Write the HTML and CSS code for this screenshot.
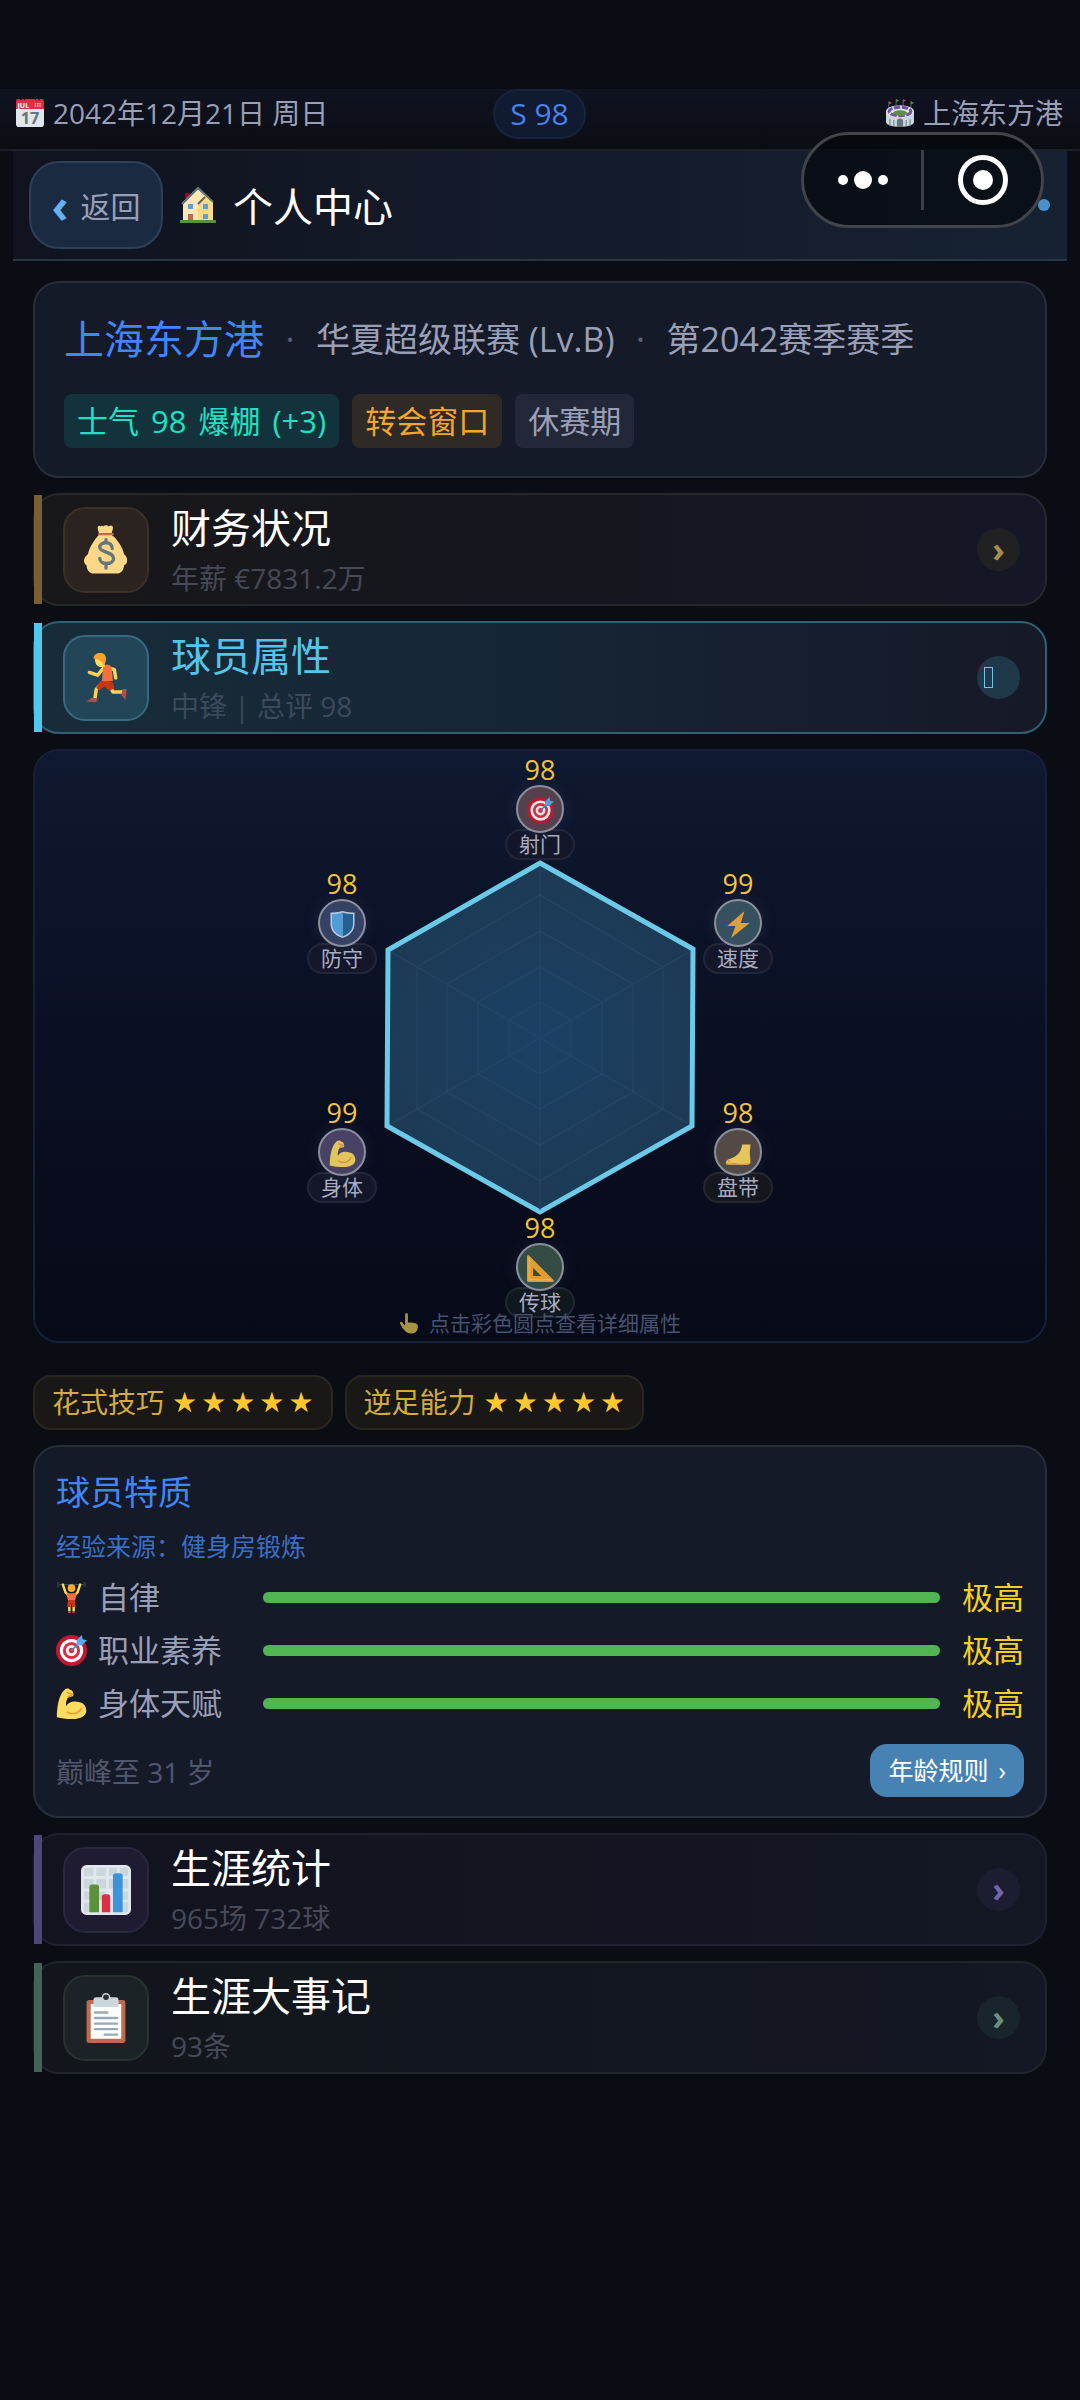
FILE: index.html
```html
<!DOCTYPE html>
<html lang="zh-CN">
<head>
    <meta charset="UTF-8">
    <meta name="viewport" content="width=device-width, initial-scale=1.0">
    <title>个人中心</title>
    <link rel="stylesheet" href="styles.css">
</head>
<body>
    <svg class="sprite" aria-hidden="true">
        <symbol id="i-calendar" viewBox="0 0 36 36" overflow="visible">
            <path fill="#e0e7ec" d="M36 32a4 4 0 0 1-4 4H4a4 4 0 0 1-4-4V9h36z"/>
            <path fill="#dd2e44" d="M0 3a3 3 0 0 1 3-3h2l1 2 2-2h2l1 2 1-2h12l1 2 1-2h2l2 2 1-2h2a3 3 0 0 1 3 3v10H0z"/>
            <g fill="#f4abba"><path d="M24 5h2v2h-2zM27 5h2v2h-2zM30 5h2v2h-2zM24 8h2v2h-2zM27 8h2v2h-2zM30 8h2v2h-2z"/></g>
            <text x="2" y="11" font-size="9" font-weight="700" fill="#fff">JUL</text>
            <text x="18" y="32" font-size="21" font-weight="700" text-anchor="middle" fill="#66757f">17</text>
        </symbol>
        <symbol id="i-stadium" viewBox="0 0 36 36">
            <path stroke="#66757f" stroke-width="1" d="M3.500 12V3M13 8V1M22 8V1M32 12V3"/>
            <path fill="#dd2e44" d="M4 3l4 2-4 2zM22 0l4 2-4 2z"/>
            <path fill="#5c913b" d="M13 0l4 2-4 2zM32 3l4 2-4 2z"/>
            <path fill="#ccd6dd" d="M0 16v14c0 3 8 6 18 6s18-3 18-6V16z"/>
            <ellipse cx="18" cy="16" rx="18" ry="8" fill="#e1e8ed"/>
            <ellipse cx="18" cy="16" rx="14" ry="5.500" fill="none" stroke="#7450a8" stroke-width="4" stroke-dasharray="8 2"/>
            <ellipse cx="18" cy="18" rx="9" ry="3.500" fill="#5c913b"/>
            <path fill="#8899a6" d="M4 26h2v8H4zM9 27h2v8H9zM25 27h2v8h-2zM30 26h2v8h-2z"/>
            <path fill="#66757f" d="M14 36v-7a4 4 0 0 1 8 0v7z"/>
        </symbol>
        <symbol id="i-house" viewBox="0 0 36 36">
            <path fill="#a0041e" d="M5 6h5v9H5z"/>
            <path fill="#ffe8b6" d="M3 17L18 2l15 13v20H3z"/>
            <path fill="#ffd983" d="M18 16l7-8 8 9v17H18z"/>
            <path fill="none" stroke="#66757f" stroke-width="2" d="M2 17L18 1l15 14"/>
            <path fill="none" stroke="#66604a" stroke-width="2" d="M18 17l7-7"/>
            <path fill="#5da1d0" d="M8 17h5v5H8zM23 17h5v5h-5zM23 27h5v5h-5z"/>
            <path fill="#c1694f" d="M8 27h5v8H8z"/>
            <path fill="#5c913b" d="M1 33h34a1 1 0 0 1 0 3H1a1 1 0 0 1 0-3z"/>
        </symbol>
        <symbol id="i-money" viewBox="0 0 36 36">
            <path fill="#fdd888" d="M12 2c0-1 1-2 2-1 1-1 2 0 2 0 1-1 3-1 4 0 1-1 3-1 3 1 0 2-1 3-1 5 4 3 8 9 9 14 3 2 3 7 0 8 0 3-2 6-5 6H9c-3 0-5-3-5-6-3-2-2-6 1-8 1-5 5-11 8-14 0-2-1-3-1-5z"/>
            <path stroke="#bf6952" stroke-width="1.600" stroke-linecap="round" d="M13 6.500h10"/>
            <path fill="none" stroke="#67757f" stroke-width="2.400" stroke-linecap="round" d="M22.500 17c0-6-9-5-9-1s10 3 10 8-10 5-10 0M18 12.500V10.500M18 31v-2.500"/>
        </symbol>
        <symbol id="i-runner" viewBox="0 0 36 36">
            <path fill="none" stroke="#fbd257" stroke-width="2.500" stroke-linecap="round" stroke-linejoin="round" d="M16 11l-4 5-6-2M21 11l3 1 1 6M15 22l-4 4-1 7M20 22l3 6 8 0"/>
            <path fill="#f4703f" d="M16 9c2-1 4-1 6 1l1 10-8 1z"/>
            <path fill="#c8360f" d="M14 20l9 1 1 5-4 1-3-3-4 3-2-2z"/>
            <path fill="#ffdc5d" d="M10 4h7v6h-3c-3 0-4-3-4-6z"/>
            <path fill="#f9a32b" d="M9 4c0-5 9-6 9 0 0 3-1 4-2 5 0-3-3-4-7-5z"/>
            <path fill="#a8524b" d="M30 26l3 0-1 8-3-4zM8 32l4 1-1 2.500-7-.5z"/>
        </symbol>
        <symbol id="i-target" viewBox="0 0 36 36">
            <circle cx="18" cy="18" r="18" fill="#be1931"/>
            <circle cx="18" cy="18" r="13.500" fill="#fff"/>
            <circle cx="18" cy="18" r="10" fill="#dd2e44"/>
            <circle cx="18" cy="18" r="6.500" fill="#fff"/>
            <circle cx="18" cy="18" r="3.200" fill="#dd2e44"/>
            <path stroke="#4289c1" stroke-width="2" d="M18 18L29 7"/>
            <path fill="#55acee" d="M24 12V6l6-6 1 5 5 1-6 6z"/>
        </symbol>
        <symbol id="i-shield" viewBox="0 0 36 36">
            <path fill="#cfe4f5" d="M18 0c6 2 11 2 16 2v15c0 10-7 16-16 19C9 33 2 27 2 17V2c5 0 10 0 16-2z"/>
            <path fill="#269" d="M18 2c5 1.500 9 2 14 2v13c0 9-6 14-14 17z"/>
            <path fill="#55acee" d="M18 2C13 3.500 9 4 4 4v13c0 9 6 14 14 17z"/>
        </symbol>
        <symbol id="i-bolt" viewBox="0 0 36 36">
            <path fill="#ffac33" d="M26 0L3 20h11L8 36l25-20H21z"/>
        </symbol>
        <symbol id="i-arm" viewBox="0 0 36 36">
            <path fill="#ffdc5d" d="M1 34C1 23 3 8 10 2c2-2 5-2 6 0 2 0 4 2 4 4 1 2 0 4-2 4l-4 1c-2 3-3 8-2 10 2-4 7-6 12-5 8 0 12 6 11 12-2 9-17 10-34 6z"/>
            <path fill="none" stroke="#ef9645" stroke-width="1.800" stroke-linecap="round" d="M13 5c2 2 5 1 6 2M14 10c2 0 3-1 4-2M13 28c6 4 14 1 16-4"/>
        </symbol>
        <symbol id="i-foot" viewBox="0 0 36 36">
            <path fill="#ffdc5d" d="M23 6h11l-1 11 1 12c0 3-2 4-5 4H4c-4 0-4-4 0-7 5-2 10-3 14-8 3-3 4-7 5-12z"/>
            <path fill="none" stroke="#ef9645" stroke-width="1.500" d="M2 31c5 3 9-1 14 1s10 0 16 0M4 27l3 2"/>
        </symbol>
        <symbol id="i-ruler" viewBox="0 0 36 36">
            <path fill="#ffac33" fill-rule="evenodd" d="M2 0l34 34-1 2H2a2 2 0 0 1-2-2V1zM8 17v11h11z"/>
            <path fill="none" stroke="#ffd983" stroke-width="1" d="M3 4v29h29"/>
        </symbol>
        <symbol id="i-point" viewBox="0 0 36 36">
            <path fill="#ffdc5d" d="M11 2c0-3 5-3 5 0v14c5 0 18 0 18 6 0 9-4 14-12 14-10 0-15-8-20-18-1-3 2-4 4-2l5 6z"/>
        </symbol>
        <symbol id="i-lifter" viewBox="0 0 36 36">
            <path stroke="#3c4650" stroke-width="1.500" d="M2 3h32"/>
            <path fill="#2b343c" d="M1 0h3v6H1zM32 0h3v6h-3z"/>
            <path fill="none" stroke="#ffdc5d" stroke-width="2.800" stroke-linecap="round" stroke-linejoin="round" d="M8 3l3 9 3 3M28 3l-3 9-3 3M15.500 26v7M20.500 26v7"/>
            <circle cx="18" cy="7" r="4.500" fill="#ffac33"/>
            <path fill="#f4703f" d="M12 13h12l-2 9h-8z"/>
            <path fill="#c23a12" d="M14 21h8l1 8h-4l-1-4-1 4h-4z"/>
            <path fill="#dd2e44" d="M14 34h3v2h-3zM19 34h3v2h-3z"/>
        </symbol>
        <symbol id="i-chart" viewBox="0 0 36 36">
            <rect width="36" height="36" rx="4" fill="#e1e8ed"/>
            <path fill="#ccd6dd" d="M2 2h7v6H2zM11 2h7v6h-7zM20 2h6v6h-6zM28 2h6v6h-6zM2 10h7v7H2zM11 10h7v7h-7zM20 10h6v7h-6zM28 10h6v7h-6zM2 19h7v6H2zM11 19h7v6h-7zM28 19h6v6h-6zM2 27h7v7H2zM28 27h6v7h-6z"/>
            <path fill="#5c913b" d="M6 34V16q0-2 2-2h3q2 0 2 2v18z"/>
            <path fill="#dd2e44" d="M15 34V23q0-2 2-2h2q2 0 2 2v11z"/>
            <path fill="#3b94d9" d="M23 34V8q0-2 2-2h3q2 0 2 2v26z"/>
        </symbol>
        <symbol id="i-clipboard" viewBox="0 0 36 36">
            <rect x="4" y="5" width="28" height="31" rx="2" fill="#c1694f"/>
            <path fill="#fff" d="M7 8h22v25H7z"/>
            <path fill="#ccd6dd" d="M9 10V5q0-2 2-2h4a3 3 0 0 1 6 0h4q2 0 2 2v5z"/>
            <circle cx="18" cy="3" r="2" fill="#292f33"/>
            <path stroke="#99aab5" stroke-width="1.700" stroke-linecap="round" d="M10 14h9M10 18h16M10 22h16M10 26h16M17 30h9"/>
        </symbol>
    </svg>

    <div class="topbar">
        <div class="topbar-item">
            <svg class="icon-sm"><use href="#i-calendar"/></svg>
            <span>2042年12月21日 周日</span>
        </div>
        <div class="rating">S 98</div>
        <div class="topbar-item topbar-right">
            <svg class="icon-sm"><use href="#i-stadium"/></svg>
            <span>上海东方港</span>
        </div>
    </div>

    <header class="header">
        <button type="button" class="back"><span class="back-arrow">‹</span>返回</button>
        <svg class="icon-md"><use href="#i-house"/></svg>
        <h1>个人中心</h1>
        <span class="online-dot"></span>
    </header>

    <div class="capsule">
        <button type="button" class="capsule-btn" aria-label="更多">
            <svg width="50" height="20" viewBox="0 0 50 20" fill="#fff"><circle cx="5" cy="10" r="5"/><circle cx="25" cy="10" r="9"/><circle cx="45" cy="10" r="5"/></svg>
        </button>
        <button type="button" class="capsule-btn" aria-label="关闭">
            <svg width="50" height="50" viewBox="0 0 50 50"><circle cx="25" cy="25" r="22.500" fill="none" stroke="#fff" stroke-width="5"/><circle cx="25" cy="25" r="10" fill="#fff"/></svg>
        </button>
    </div>

    <main class="content">
        <section class="card club">
            <div class="club-line">
                <strong class="club-name">上海东方港</strong>
                <span class="sep">·</span>
                <span>华夏超级联赛 (Lv.B)</span>
                <span class="sep">·</span>
                <span>第2042赛季赛季</span>
            </div>
            <div class="tags">
                <span class="tag tag-green"><span>士气</span> <span>98</span> <span>爆棚</span> <span>(+3)</span></span>
                <span class="tag tag-orange">转会窗口</span>
                <span class="tag">休赛期</span>
            </div>
        </section>

        <button type="button" class="row row-gold">
            <span class="row-icon"><svg><use href="#i-money"/></svg></span>
            <span class="row-text">
                <span class="row-title">财务状况</span>
                <span class="row-sub">年薪 €7831.2万</span>
            </span>
            <span class="row-arrow">›</span>
        </button>

        <button type="button" class="row row-cyan">
            <span class="row-icon"><svg><use href="#i-runner"/></svg></span>
            <span class="row-text">
                <span class="row-title">球员属性</span>
                <span class="row-sub">中锋 | 总评 98</span>
            </span>
            <span class="row-arrow row-open"><i class="box-glyph"></i></span>
        </button>

        <section class="radar">
            <svg class="radar-chart" viewBox="-190 -190 380 380">
                <defs>
                    <radialGradient id="fill" gradientUnits="userSpaceOnUse" cx="0" cy="0" r="178">
                        <stop offset="0" stop-color="#1c4066"/>
                        <stop offset="0.500" stop-color="#1c3d5b"/>
                        <stop offset="1" stop-color="#1c3a54"/>
                    </radialGradient>
                </defs>
                <polygon class="radar-value" points="0,-175 153,-89 152,88 0,174 -153,88 -152,-88"/>
                <g class="radar-grid">
                    <polygon points="0,-36 31,-18 31,18 0,36 -31,18 -31,-18"/>
                    <polygon points="0,-71 62,-36 62,36 0,71 -62,36 -62,-36"/>
                    <polygon points="0,-107 93,-54 93,54 0,107 -93,54 -93,-54"/>
                    <polygon points="0,-143 123,-71 123,71 0,143 -123,71 -123,-71"/>
                    <path d="M0-172V172M-149-86L149 86M-149 86L149-86"/>
                </g>
            </svg>
            <button type="button" class="node node-top c-red"><b>98</b><span class="node-dot"><svg><use href="#i-target"/></svg></span><span class="node-label">射门</span></button>
            <button type="button" class="node node-tr c-teal"><b>99</b><span class="node-dot"><svg><use href="#i-bolt"/></svg></span><span class="node-label">速度</span></button>
            <button type="button" class="node node-br c-brown"><b>98</b><span class="node-dot"><svg><use href="#i-foot"/></svg></span><span class="node-label">盘带</span></button>
            <button type="button" class="node node-bottom c-green"><b>98</b><span class="node-dot"><svg><use href="#i-ruler"/></svg></span><span class="node-label">传球</span></button>
            <button type="button" class="node node-bl c-purple"><b>99</b><span class="node-dot"><svg><use href="#i-arm"/></svg></span><span class="node-label">身体</span></button>
            <button type="button" class="node node-tl c-blue"><b>98</b><span class="node-dot"><svg><use href="#i-shield"/></svg></span><span class="node-label">防守</span></button>
            <p class="radar-hint"><svg><use href="#i-point"/></svg>点击彩色圆点查看详细属性</p>
        </section>

        <div class="skills">
            <div class="skill">花式技巧 <span class="stars"><i>★</i><i>★</i><i>★</i><i>★</i><i>★</i></span></div>
            <div class="skill">逆足能力 <span class="stars"><i>★</i><i>★</i><i>★</i><i>★</i><i>★</i></span></div>
        </div>

        <section class="card traits">
            <h2>球员特质</h2>
            <p class="traits-source">经验来源：健身房锻炼</p>
            <div class="trait">
                <span class="trait-name"><svg><use href="#i-lifter"/></svg>自律</span>
                <span class="trait-bar"><span class="trait-fill" style="width: 100%"></span></span>
                <span class="trait-level">极高</span>
            </div>
            <div class="trait">
                <span class="trait-name"><svg><use href="#i-target"/></svg>职业素养</span>
                <span class="trait-bar"><span class="trait-fill" style="width: 100%"></span></span>
                <span class="trait-level">极高</span>
            </div>
            <div class="trait">
                <span class="trait-name"><svg><use href="#i-arm"/></svg>身体天赋</span>
                <span class="trait-bar"><span class="trait-fill" style="width: 100%"></span></span>
                <span class="trait-level">极高</span>
            </div>
            <div class="traits-footer">
                <span>巅峰至 31 岁</span>
                <button type="button" class="age-btn">年龄规则 <span>›</span></button>
            </div>
        </section>

        <button type="button" class="row row-purple">
            <span class="row-icon"><svg><use href="#i-chart"/></svg></span>
            <span class="row-text">
                <span class="row-title">生涯统计</span>
                <span class="row-sub">965场 732球</span>
            </span>
            <span class="row-arrow">›</span>
        </button>

        <button type="button" class="row row-green">
            <span class="row-icon"><svg><use href="#i-clipboard"/></svg></span>
            <span class="row-text">
                <span class="row-title">生涯大事记</span>
                <span class="row-sub">93条</span>
            </span>
            <span class="row-arrow">›</span>
        </button>
    </main>
</body>
</html>
```

FILE: styles.css
```css
* {
    box-sizing: border-box;
}
body {
    margin: 0;
    padding-top: 89px;
    min-height: 100vh;
    position: relative;
    background: #0a0d13;
    color: #9a9fb8;
    font-family: "Open Sans", "Noto Sans CJK SC", sans-serif;
    font-size: 28px;
}
h1, h2, p {
    margin: 0;
    font-weight: 400;
}
i {
    font-style: normal;
}
button {
    font-family: inherit;
    font-size: inherit;
    color: inherit;
    margin: 0;
    padding: 0;
    border: 0;
    background: none;
    cursor: pointer;
}
svg {
    flex: none;
}
.sprite {
    position: absolute;
    width: 0;
    height: 0;
}
.icon-sm {
    width: 28px;
    height: 28px;
    overflow: visible;
}
.icon-md {
    width: 36px;
    height: 38px;
}

/* top bar */
.topbar {
    display: grid;
    grid-template-columns: 1fr auto 1fr;
    align-items: start;
    height: 62px;
    padding: 0 17px 0 16px;
    background: linear-gradient(#101321, #0b0d13);
    border-bottom: 2px solid #1c202a;
}
.topbar-item {
    display: flex;
    align-items: center;
    gap: 9px;
    line-height: 48px;
}
.topbar-right {
    justify-content: flex-end;
}
.rating {
    padding: 0 15px;
    border: 2px solid #17233f;
    border-radius: 25px;
    background: #101a30;
    color: #4a80ee;
    font-size: 30px;
    line-height: 46px;
}

/* page header */
.header {
    display: flex;
    align-items: center;
    height: 110px;
    margin: 0 13px;
    padding: 0 17px 0 16px;
    background: linear-gradient(90deg, #10131f, #141b2a 50%, #162232);
    border-bottom: 2px solid #293444;
}
.back {
    display: flex;
    align-items: center;
    justify-content: center;
    gap: 12px;
    width: 134px;
    height: 88px;
    margin-right: 17px;
    border: 2px solid #2c4058;
    border-radius: 30px;
    background: #1a2a40;
    font-size: 30px;
}
.back-arrow {
    color: #68aef2;
    font-size: 46px;
    font-weight: 700;
    line-height: 46px;
}
.header h1 {
    margin-left: 17px;
    color: #fff;
    font-size: 40px;
}
.online-dot {
    width: 12px;
    height: 12px;
    margin-left: auto;
    border-radius: 50%;
    background: #4f8fca;
}

/* host app menu, floats over the page */
.capsule {
    position: absolute;
    top: 132px;
    right: 36px;
    display: flex;
    align-items: center;
    width: 243px;
    height: 96px;
    border: 3px solid #414448;
    border-radius: 48px;
    background: rgba(5, 7, 10, 0.65);
}
.capsule-btn {
    flex: 1;
    display: flex;
    align-items: center;
    justify-content: center;
    height: 60px;
}
.capsule-btn + .capsule-btn {
    border-left: 3px solid #3c4046;
}

.content {
    display: flex;
    flex-direction: column;
    gap: 15px;
    padding: 20px 33px 40px;
}
.card {
    border: 2px solid #292d3b;
    border-radius: 26px;
    background: #151a28;
}

/* club */
.club {
    padding: 28px 29px;
}
.club-line {
    display: flex;
    align-items: center;
    gap: 18px;
    font-size: 34px;
    line-height: 56px;
}
.club-name {
    color: #4285f6;
    font-size: 40px;
    font-weight: 400;
}
.sep {
    width: 16px;
    text-align: center;
    color: #5b6074;
}
.tags {
    display: flex;
    gap: 13px;
    margin-top: 27px;
}
.tag {
    display: flex;
    gap: 12px;
    padding: 0 13px;
    border-radius: 8px;
    background: #232838;
    font-size: 31px;
    line-height: 54px;
}
.tag-green {
    background: #12333b;
    color: #1fe0c4;
}
.tag-orange {
    background: #302a27;
    color: #f5a42c;
}

/* section rows */
.row {
    position: relative;
    display: flex;
    align-items: center;
    gap: 22px;
    height: 113px;
    padding: 0 25px 0 28px;
    border: 2px solid #232429;
    border-radius: 26px;
    text-align: left;
}
.row::before {
    content: "";
    position: absolute;
    left: -1px;
    top: 0;
    bottom: 0;
    width: 8px;
}
.row-icon {
    display: flex;
    align-items: center;
    justify-content: center;
    width: 86px;
    height: 86px;
    border: 2px solid;
    border-radius: 22px;
}
.row-icon svg {
    width: 50px;
    height: 50px;
}
.row-text {
    display: flex;
    flex-direction: column;
    gap: 2px;
}
.row-title {
    color: #fff;
    font-size: 40px;
    line-height: 54px;
}
.row-sub {
    color: #474957;
    line-height: 42px;
}
.row-arrow {
    display: flex;
    align-items: center;
    justify-content: center;
    width: 43px;
    height: 43px;
    margin-left: auto;
    border-radius: 50%;
    font-size: 34px;
    font-weight: 700;
    line-height: 43px;
}
.row-gold {
    border-color: #28272a;
    background: linear-gradient(90deg, #18171a, #15171f 55%, #151727);
}
.row-gold::before {
    background: #786033;
}
.row-gold .row-icon {
    border-color: #3a3126;
    background: #2a231f;
}
.row-gold .row-arrow {
    background: #212124;
    color: #a98b4d;
}
.row-cyan {
    border-color: #2f6073;
    background: linear-gradient(90deg, #172c38, #162636 45%, #161927);
}
.row-cyan::before {
    background: #4fc8ee;
}
.row-cyan .row-icon {
    border-color: #356b82;
    background: #224658;
}
.row-cyan .row-title {
    color: #55c4ea;
}
.row-cyan .row-sub {
    color: #3d4a5b;
}
.row-cyan .row-arrow {
    background: #1f384a;
}
.row-arrow.row-open {
    justify-content: flex-start;
    padding-left: 7px;
}
.box-glyph {
    width: 9px;
    height: 21px;
    border: 1px solid #6cc8e8;
}
.row-purple {
    border-color: #1f2030;
    background: linear-gradient(90deg, #12131f, #141724);
}
.row-purple::before {
    background: #4d477c;
}
.row-purple .row-icon {
    border-color: #2a2640;
    background: #1f1b31;
}
.row-purple .row-arrow {
    background: #1c1d30;
    color: #6f67a8;
}
.row-green {
    border-color: #20252a;
    background: linear-gradient(90deg, #12161b, #141724);
}
.row-green::before {
    background: #426355;
}
.row-green .row-icon {
    border-color: #28332f;
    background: #1b2326;
}
.row-green .row-arrow {
    background: #1a242c;
    color: #6a8f7c;
}

/* radar */
.radar {
    position: relative;
    height: 594px;
    border: 2px solid #15203a;
    border-radius: 26px;
    background: linear-gradient(#0f1931, #0a0f23 50%, #070a17);
}
.radar-chart {
    display: block;
    width: 380px;
    height: 380px;
    margin: 97px auto 0;
}
.radar-value {
    fill: url(#fill);
    stroke: #6acae8;
    stroke-width: 5;
}
.radar-grid {
    fill: none;
    stroke: #264767;
    stroke-width: 1;
}
.node {
    position: absolute;
    display: flex;
    flex-direction: column;
    align-items: center;
    transform: translate(-50%, -54px);
}
.node-top { left: 50%; top: 58px; }
.node-tr { left: calc(50% + 198px); top: 172px; }
.node-br { left: calc(50% + 198px); top: 401px; }
.node-bottom { left: 50%; top: 516px; }
.node-bl { left: calc(50% - 198px); top: 401px; }
.node-tl { left: calc(50% - 198px); top: 172px; }
.node b {
    color: #f0c53c;
    font-size: 27px;
    font-weight: 400;
    line-height: 30px;
}
.node-dot {
    z-index: 1;
    display: flex;
    align-items: center;
    justify-content: center;
    width: 48px;
    height: 48px;
    border: 2px solid #8c8f9d;
    border-radius: 50%;
    box-shadow: 0 0 16px rgba(120, 130, 170, 0.15);
}
.node-dot svg {
    width: 27px;
    height: 27px;
    margin-top: 3px;
    opacity: 0.85;
}
.node-label {
    margin-top: -4px;
    padding: 0 12px;
    border: 2px solid #232638;
    border-radius: 16px;
    background: #14172a;
    color: #a9adc2;
    font-size: 21px;
    line-height: 27px;
}
.c-red .node-dot { background: #55404e; }
.c-teal .node-dot { background: #36505f; }
.c-brown .node-dot { background: #544a45; }
.c-green .node-dot { background: #354c44; }
.c-purple .node-dot { background: #484264; }
.c-blue .node-dot { background: #354264; }
.c-green .node-label { background: #10181f; border-color: #1e2a30; }
.c-brown .node-label { background: #15171f; border-color: #26272e; }
.radar-hint {
    position: absolute;
    left: 0;
    right: 0;
    bottom: 3px;
    display: flex;
    align-items: center;
    justify-content: center;
    gap: 10px;
    color: #46526f;
    font-size: 21px;
    line-height: 30px;
}
.radar-hint svg {
    width: 20px;
    height: 21px;
    opacity: 0.65;
}

/* skills */
.skills {
    display: flex;
    gap: 12px;
    margin-top: 17px;
}
.skill {
    display: flex;
    gap: 8px;
    height: 55px;
    padding: 0 17px;
    border: 2px solid #2a271f;
    border-radius: 18px;
    background: #191817;
    color: #d3ab3f;
    line-height: 51px;
}
.stars {
    display: flex;
    gap: 4px;
    color: #ffc72e;
    font-family: "DejaVu Sans", sans-serif;
}

/* traits */
.traits {
    padding: 23px 21px 19px;
}
.traits h2 {
    color: #4285f6;
    font-size: 34px;
    line-height: 44px;
}
.traits-source {
    margin: 15px 0 13px;
    color: #3b6fc4;
    font-size: 25px;
    line-height: 34px;
}
.trait {
    display: grid;
    grid-template-columns: 207px 1fr 84px;
    align-items: center;
    height: 43px;
    margin-bottom: 10px;
    font-size: 31px;
    line-height: 43px;
}
.trait-name {
    display: flex;
    align-items: center;
    gap: 11px;
}
.trait-name svg {
    width: 31px;
    height: 31px;
}
.trait-bar {
    height: 11px;
    border-radius: 6px;
    background: #232838;
}
.trait-fill {
    display: block;
    height: 11px;
    border-radius: 6px;
    background: #51b551;
}
.trait-level {
    color: #f3d023;
    text-align: right;
}
.traits-footer {
    display: flex;
    align-items: center;
    justify-content: space-between;
    margin-top: 19px;
    color: #50566c;
}
.age-btn {
    display: flex;
    gap: 10px;
    height: 53px;
    padding: 0 18px;
    border-radius: 17px;
    background: #4682b4;
    color: #fff;
    font-size: 25px;
    line-height: 53px;
}
```
